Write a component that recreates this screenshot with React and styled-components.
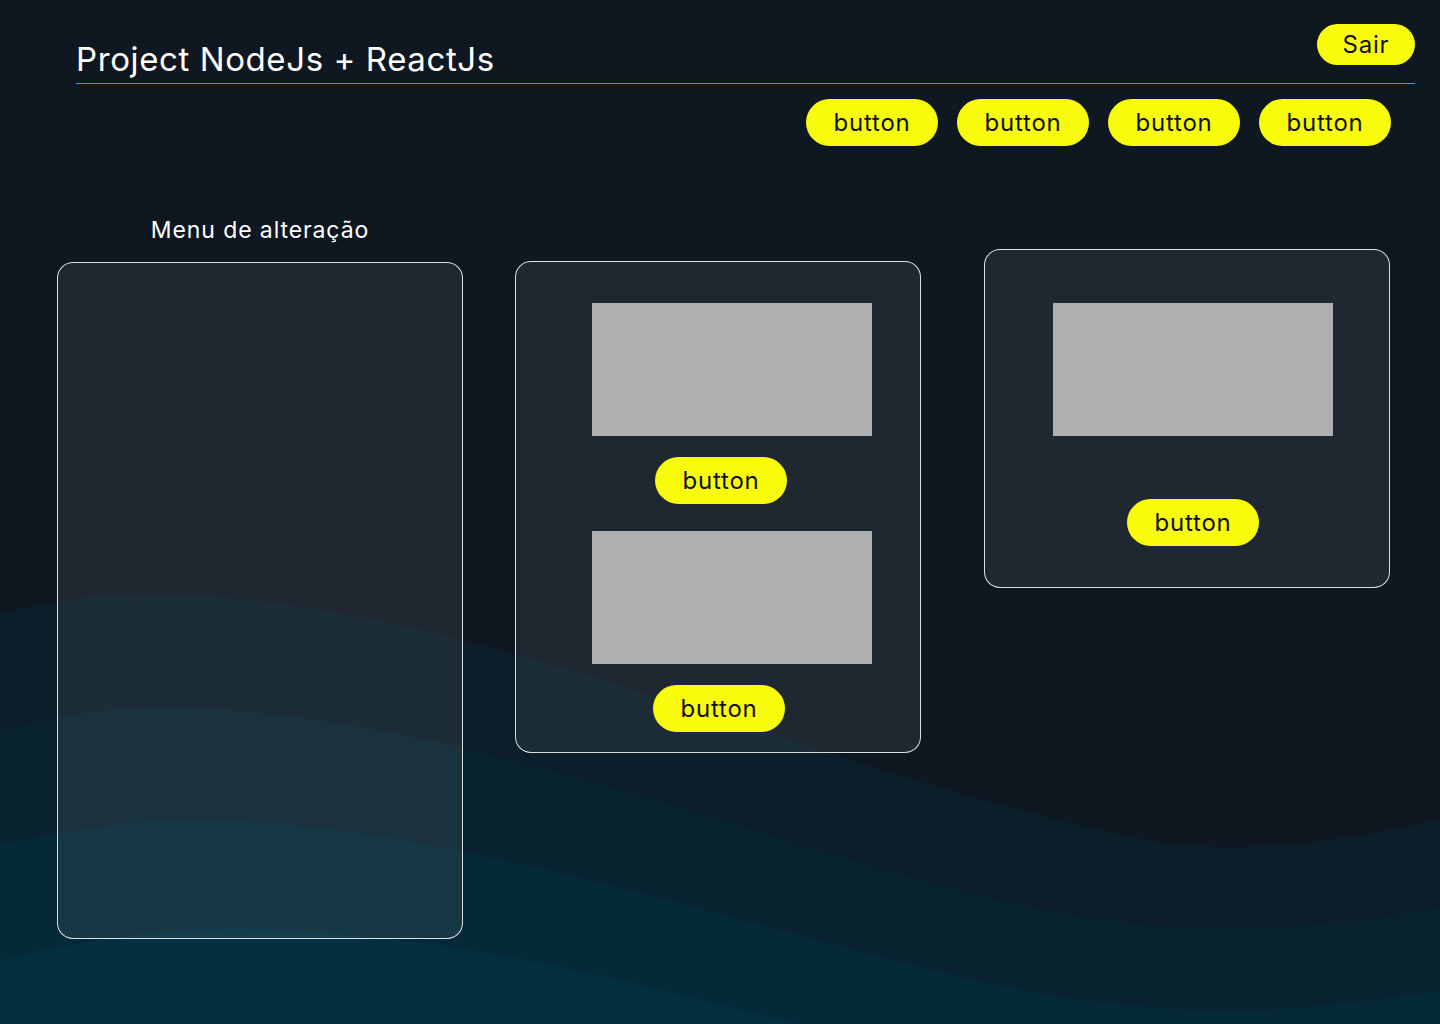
import React from "react";
import styled, { createGlobalStyle } from "styled-components";

const GlobalStyle = createGlobalStyle`
  * {
    box-sizing: border-box;
  }
  body {
    margin: 0;
    background-color: #0f1821;
    font-family: "Inter", "Open Sans", sans-serif;
    color: #ffffff;
  }
`;

const Page = styled.div`
  position: relative;
  width: 1440px;
  height: 1024px;
  overflow: hidden;
  background-color: #0f1821;
`;

const Waves = styled.svg`
  position: absolute;
  inset: 0;
  width: 100%;
  height: 100%;
  z-index: 0;
`;

const Content = styled.div`
  position: relative;
  z-index: 1;
`;

const Header = styled.header`
  display: flex;
  justify-content: space-between;
  align-items: flex-end;
  margin: 0 25px 0 76px;
  padding-top: 24px;
  border-bottom: 1px solid #1ba6df;
`;

const Title = styled.h1`
  margin: 0;
  font-size: 33px;
  font-weight: 400;
  line-height: 48px;
  letter-spacing: 0.6px;
  color: #ffffff;
`;

const Button = styled.button`
  width: ${(props) => props.width || 132}px;
  height: ${(props) => props.height || 47}px;
  margin-left: ${(props) => props.shift || 0}px;
  border: none;
  border-radius: 24px;
  background-color: #f8fc0c;
  color: #111111;
  font-family: "Inter", "Open Sans", sans-serif;
  font-size: 24px;
  font-weight: 400;
  letter-spacing: 0.8px;
  cursor: pointer;
  flex-shrink: 0;
`;

const LogoutButton = styled(Button)`
  margin-bottom: 18px;
  border-radius: 21px;
`;

const NavBar = styled.nav`
  display: flex;
  justify-content: flex-end;
  gap: 19px;
  padding-right: 49px;
  margin-top: 15px;
`;

const Main = styled.main`
  display: flex;
  align-items: flex-start;
  padding-left: 57px;
  margin-top: 69px;
`;

const MenuColumn = styled.section`
  display: flex;
  flex-direction: column;
  align-items: center;
  width: 406px;
`;

const MenuLabel = styled.h2`
  margin: 0 0 17px;
  font-size: 23px;
  font-weight: 400;
  line-height: 30px;
  letter-spacing: 0.9px;
  color: #ffffff;
`;

const Card = styled.div`
  display: flex;
  flex-direction: column;
  align-items: center;
  width: 406px;
  height: ${(props) => props.height}px;
  margin-top: ${(props) => props.top || 0}px;
  margin-left: ${(props) => props.left || 0}px;
  padding-top: ${(props) => props.padTop || 0}px;
  padding-left: ${(props) => props.padLeft || 0}px;
  gap: ${(props) => props.gap || 0}px;
  border: 1px solid rgba(255, 255, 255, 0.85);
  border-radius: 16px;
  background-color: rgba(255, 255, 255, 0.07);
`;

const Slot = styled.div`
  display: flex;
  flex-direction: column;
  align-items: center;
  gap: 21px;
`;

const Thumb = styled.div`
  width: 280px;
  height: 133px;
  margin-left: ${(props) => props.shift || 0}px;
  background-color: #aeafb1;
`;

const BackgroundWaves = () => (
  <Waves viewBox="0 0 1440 1024" preserveAspectRatio="none">
    <path
      fill="#0b1e29"
      d="M0,613 C60,600 100,594 140,594 C420,594 700,720 950,790 C1080,828 1160,848 1230,847 C1320,846 1390,830 1440,820 V1024 H0 Z"
    />
    <path
      fill="#08232f"
      d="M0,730 C60,716 110,707 160,707 C450,710 750,840 1000,900 C1100,922 1170,930 1240,928 C1330,926 1400,915 1440,907 V1024 H0 Z"
    />
    <path
      fill="#052937"
      d="M0,845 C70,830 130,820 190,820 C480,822 800,950 1050,995 C1120,1006 1180,1011 1240,1010 C1330,1008 1400,997 1440,990 V1024 H0 Z"
    />
    <path
      fill="#032f41"
      d="M0,960 C70,943 150,929 230,929 C450,930 640,985 800,1024 V1040 H0 Z"
    />
  </Waves>
);

const navItems = ["button", "button", "button", "button"];

const App = () => {
  return (
    <Page>
      <GlobalStyle />
      <BackgroundWaves />
      <Content>
        <Header>
          <Title>Project NodeJs + ReactJs</Title>
          <LogoutButton width={98} height={41}>
            Sair
          </LogoutButton>
        </Header>
        <NavBar>
          {navItems.map((label, i) => (
            <Button key={i}>{label}</Button>
          ))}
        </NavBar>
        <Main>
          <MenuColumn>
            <MenuLabel>Menu de alteração</MenuLabel>
            <Card height={677} />
          </MenuColumn>
          <Card height={492} top={46} left={52} padTop={41} gap={27}>
            <Slot>
              <Thumb shift={28} />
              <Button shift={6}>button</Button>
            </Slot>
            <Slot>
              <Thumb shift={28} />
              <Button shift={2}>button</Button>
            </Slot>
          </Card>
          <Card height={339} top={34} left={63} padTop={53} padLeft={12} gap={63}>
            <Thumb />
            <Button>button</Button>
          </Card>
        </Main>
      </Content>
    </Page>
  );
};

export default App;
